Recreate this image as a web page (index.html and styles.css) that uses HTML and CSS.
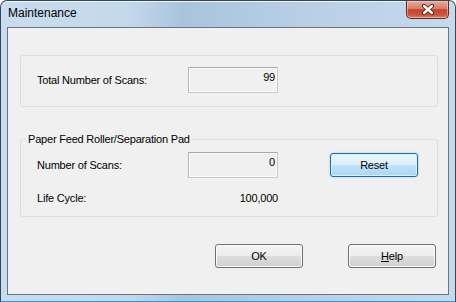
FILE: index.html
```html
<!DOCTYPE html>
<html lang="en">
<head>
<meta charset="UTF-8">
<meta name="viewport" content="width=device-width, initial-scale=1.0">
<title>Maintenance</title>
<link rel="stylesheet" href="styles.css">
</head>
<body>
<div class="window">
  <div class="titlebar">
    <span class="title">Maintenance</span>
    <button class="close" title="Close">
      <svg width="14" height="11" viewBox="0 0 14 11">
        <path d="M3 2 L11 9 M11 2 L3 9" stroke="#4a1e16" stroke-width="4.2" stroke-linecap="round"/>
        <path d="M3 2 L11 9 M11 2 L3 9" stroke="#fff" stroke-width="2.4" stroke-linecap="round"/>
      </svg>
    </button>
  </div>
  <div class="client">
    <div class="group group-total">
      <div class="row">
        <span class="label">Total Number of Scans:</span>
        <div class="field">99</div>
      </div>
    </div>
    <fieldset class="group group-roller">
      <legend>Paper Feed Roller/Separation Pad</legend>
      <div class="row">
        <span class="label">Number of Scans:</span>
        <div class="field">0</div>
        <button class="btn btn-default btn-reset">Reset</button>
      </div>
      <div class="row row-life">
        <span class="label">Life Cycle:</span>
        <span class="value">100,000</span>
      </div>
    </fieldset>
    <div class="actions">
      <button class="btn">OK</button>
      <button class="btn"><u>H</u>elp</button>
    </div>
  </div>
</div>
</body>
</html>
```

FILE: styles.css
```css
body {
  margin: 0;
  background: #fff;
  font-family: "Liberation Sans", Arial, sans-serif;
}
.window {
  width: 456px;
  height: 302px;
  box-sizing: border-box;
  display: flex;
  flex-direction: column;
  padding: 0 6px 6px 6px;
  border: 1px solid #33475b;
  border-bottom-color: #1f9fd4;
  border-radius: 7px 7px 0 0;
  background: linear-gradient(90deg, #c9dcef 0%, #c4d8ec 28%, #aac4de 40%, #b0c9e1 52%, #bad0e7 70%, #c6d9ed 100%);
  box-shadow: inset 0 1px 0 #eef4fa;
}
.titlebar {
  height: 26px;
  display: flex;
  justify-content: space-between;
  align-items: flex-start;
  flex-shrink: 0;
}
.title {
  padding: 4px 0 0 1px;
  font-size: 12px;
  line-height: 16px;
  color: #000;
}
.close {
  width: 43px;
  height: 18px;
  padding: 0;
  display: flex;
  align-items: center;
  justify-content: center;
  border: 1px solid #5e2a22;
  border-top: none;
  border-radius: 0 0 5px 5px;
  background: linear-gradient(#e9ab9c 0%, #d77c66 45%, #c1432c 52%, #cf5a3f 85%, #e08a6d 100%);
  box-shadow: inset 0 0 0 1px rgba(255, 220, 210, 0.5);
}
.client {
  flex: 1;
  border: 1px solid #667483;
  background: #f0f0f0;
  font-size: 11px;
  letter-spacing: -0.2px;
  color: #000;
}
.group {
  border: 1px solid #d5dfe5;
  border-radius: 3px;
  margin: 0 10px 0 12px;
}
.group-total {
  margin-top: 27px;
  padding: 11px 0 13px 16px;
}
.group-roller {
  margin-top: 25px;
  padding: 6px 0 5px 16px;
  min-width: 0;
}
.group-roller legend {
  margin-left: -11px;
  padding: 0 2px;
  line-height: 14px;
}
.row {
  display: flex;
  align-items: center;
  height: 26px;
}
.row-life {
  margin-top: 7px;
}
.label {
  width: 151px;
}
.field {
  box-sizing: border-box;
  width: 90px;
  height: 26px;
  padding: 2px 2px 0 0;
  line-height: 14px;
  text-align: right;
  align-self: flex-start;
  border: 1px solid #c4c8cc;
  border-top-color: #a6a9ad;
  border-left-color: #b4b8bc;
  box-shadow: inset 0 0 0 1px #fbfbfb;
}
.value {
  width: 90px;
  text-align: right;
}
.btn {
  width: 88px;
  height: 24px;
  padding: 0;
  font-family: "Liberation Sans", Arial, sans-serif;
  font-size: 11px;
  letter-spacing: -0.2px;
  color: #000;
  border: 1px solid #707070;
  border-radius: 3px;
  background: linear-gradient(#f3f3f3 0%, #ececec 48%, #dddddd 52%, #cfcfcf 100%);
  box-shadow: inset 0 0 0 1px #fbfbfb;
}
.btn-default {
  border-color: #2e6a96;
  background: linear-gradient(#e9f5fc 0%, #dbeffb 48%, #bfe3f8 52%, #a9d7f2 100%);
  box-shadow: inset 0 0 0 1px #d6f0fd, 0 0 2px #7ac3ec;
}
.btn-reset {
  margin-left: 52px;
}
.actions {
  display: flex;
  justify-content: flex-end;
  gap: 45px;
  margin-top: 27px;
  padding-right: 12px;
}
```
